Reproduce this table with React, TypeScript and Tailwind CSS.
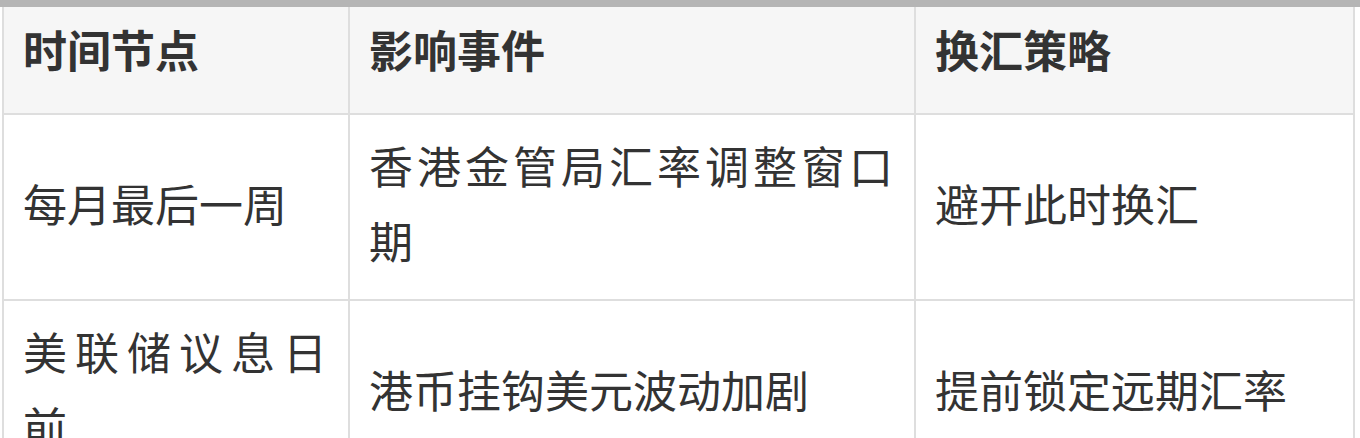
const rows = [
  { when: "每月最后一周", event: "香港金管局汇率调整窗口期", plan: "避开此时换汇" },
  { when: "美联储议息日前", event: "港币挂钩美元波动加剧", plan: "提前锁定远期汇率" },
];

export default function App() {
  return (
    <div className="w-[1360px] h-[438px] overflow-hidden bg-white text-[#333] font-['Noto_Sans_CJK_SC','Noto_Sans',sans-serif]">
      <div className="h-[7px] bg-[#b5b5b5]" />
      <div className="pl-[2px]">
        <table className="table-fixed border-collapse w-[1351px] text-[44px] leading-[75px]">
          <colgroup>
            <col className="w-[346px]" />
            <col className="w-[566px]" />
            <col className="w-[439px]" />
          </colgroup>
          <thead>
            <tr className="bg-[#f6f6f6]">
              <th className="border-2 border-t-0 border-[#dedede] pl-[19px] pr-[21px] pt-[5px] pb-[26px] text-left font-bold">时间节点</th>
              <th className="border-2 border-t-0 border-[#dedede] pl-[19px] pr-[21px] pt-[5px] pb-[26px] text-left font-bold">影响事件</th>
              <th className="border-2 border-t-0 border-[#dedede] pl-[19px] pr-[21px] pt-[5px] pb-[26px] text-left font-bold">换汇策略</th>
            </tr>
          </thead>
          <tbody>
            {rows.map((r) => (
              <tr key={r.when}>
                <td className="border-2 border-[#dedede] pl-[19px] pr-[21px] pt-[13px] pb-[21px] align-middle text-justify">{r.when}</td>
                <td className="border-2 border-[#dedede] pl-[19px] pr-[21px] pt-[13px] pb-[21px] align-middle text-justify">{r.event}</td>
                <td className="border-2 border-[#dedede] pl-[19px] pr-[21px] pt-[13px] pb-[21px] align-middle text-justify">{r.plan}</td>
              </tr>
            ))}
          </tbody>
        </table>
      </div>
    </div>
  );
}
